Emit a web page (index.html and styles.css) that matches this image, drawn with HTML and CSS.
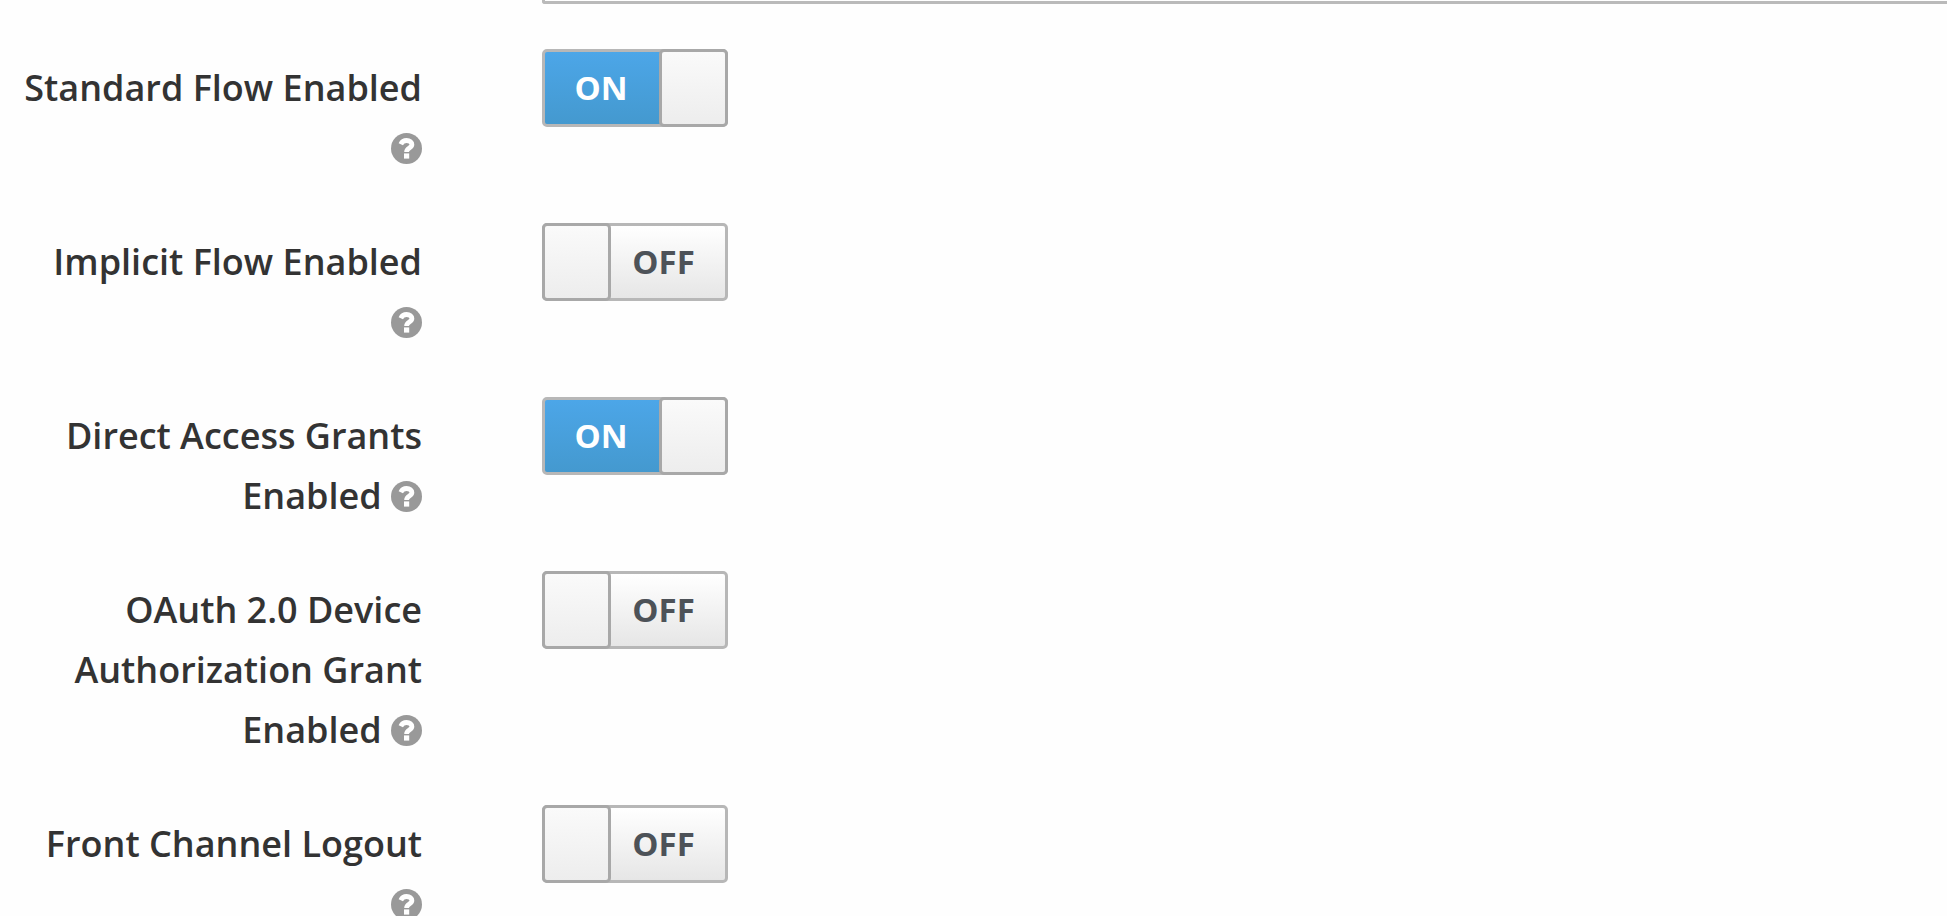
FILE: index.html
```html
<!DOCTYPE html>
<html lang="en">
<head>
    <meta charset="UTF-8">
    <meta name="viewport" content="width=device-width, initial-scale=1.0">
    <title>Client Settings</title>
    <link rel="stylesheet" href="styles.css">
</head>
<body>
    <svg class="sprite" aria-hidden="true">
        <symbol id="help" viewBox="0 0 31 31">
            <circle cx="15.5" cy="15.5" r="15.5" fill="#999"/>
            <path d="M9.8 11.2C11 8.7 13 7.5 15.6 7.5C18.8 7.5 20.9 9.2 20.9 11.6C20.9 15.3 15.6 14.8 15.6 18.9" fill="none" stroke="#fff" stroke-width="4.8"/>
            <rect x="13" y="20.4" width="5.2" height="5.2" fill="#fff"/>
        </symbol>
    </svg>

    <form class="settings">
        <div class="text-field"></div>

        <div class="form-group">
            <label class="control-label">Standard Flow Enabled <svg class="help"><use href="#help"/></svg></label>
            <div class="switch on">
                <span class="switch-text">ON</span>
                <span class="switch-handle"></span>
            </div>
        </div>

        <div class="form-group">
            <label class="control-label">Implicit Flow Enabled <svg class="help"><use href="#help"/></svg></label>
            <div class="switch off">
                <span class="switch-handle"></span>
                <span class="switch-text">OFF</span>
            </div>
        </div>

        <div class="form-group">
            <label class="control-label">Direct Access Grants Enabled <svg class="help"><use href="#help"/></svg></label>
            <div class="switch on">
                <span class="switch-text">ON</span>
                <span class="switch-handle"></span>
            </div>
        </div>

        <div class="form-group">
            <label class="control-label">OAuth 2.0 Device Authorization Grant Enabled <svg class="help"><use href="#help"/></svg></label>
            <div class="switch off">
                <span class="switch-handle"></span>
                <span class="switch-text">OFF</span>
            </div>
        </div>

        <div class="form-group">
            <label class="control-label">Front Channel Logout <svg class="help"><use href="#help"/></svg></label>
            <div class="switch off">
                <span class="switch-handle"></span>
                <span class="switch-text">OFF</span>
            </div>
        </div>
    </form>
</body>
</html>
```

FILE: styles.css
```css
* {
    margin: 0;
    padding: 0;
    box-sizing: border-box;
}
body {
    font-family: "Open Sans", "Noto Sans", sans-serif;
    font-size: 36px;
    line-height: 60px;
    color: #333;
    background: #fefefe;
    height: 100vh;
    overflow: hidden;
}
.sprite {
    display: none;
}
.settings {
    height: 100vh;
    padding-left: 22px;
    overflow: hidden;
}
.text-field {
    height: 4px;
    margin: 0 0 45px 520px;
    border: 3px solid #bababa;
    border-width: 0 0 3px 3px;
    border-bottom-left-radius: 3px;
    background: #fff;
}
.form-group {
    display: flex;
    align-items: flex-start;
    gap: 120px;
    margin-bottom: 45px;
}
.control-label {
    width: 400px;
    padding-top: 9px;
    font-weight: 600;
    text-align: right;
}
.help {
    display: inline-block;
    width: 31px;
    height: 31px;
    vertical-align: -3px;
}
.switch {
    display: flex;
    width: 186px;
    height: 78px;
    border: 3px solid #b7b7b7;
    border-radius: 5px;
    font-size: 33px;
    font-weight: 700;
    line-height: 72px;
    text-align: center;
}
.switch-text {
    flex: 1;
    padding-right: 5px;
}
.switch-handle {
    width: 69px;
    height: 78px;
    margin: -3px;
    border: 3px solid #a8a8a8;
    border-radius: 5px;
    background: linear-gradient(#fafafa, #ededed);
}
.switch.on {
    background: linear-gradient(#4ca6e8, #4499cf);
    color: #fff;
}
.switch.off {
    background: linear-gradient(#fff, #e6e6e6);
    color: #4d5258;
}
.switch.off .switch-text {
    padding-right: 6px;
}
```
